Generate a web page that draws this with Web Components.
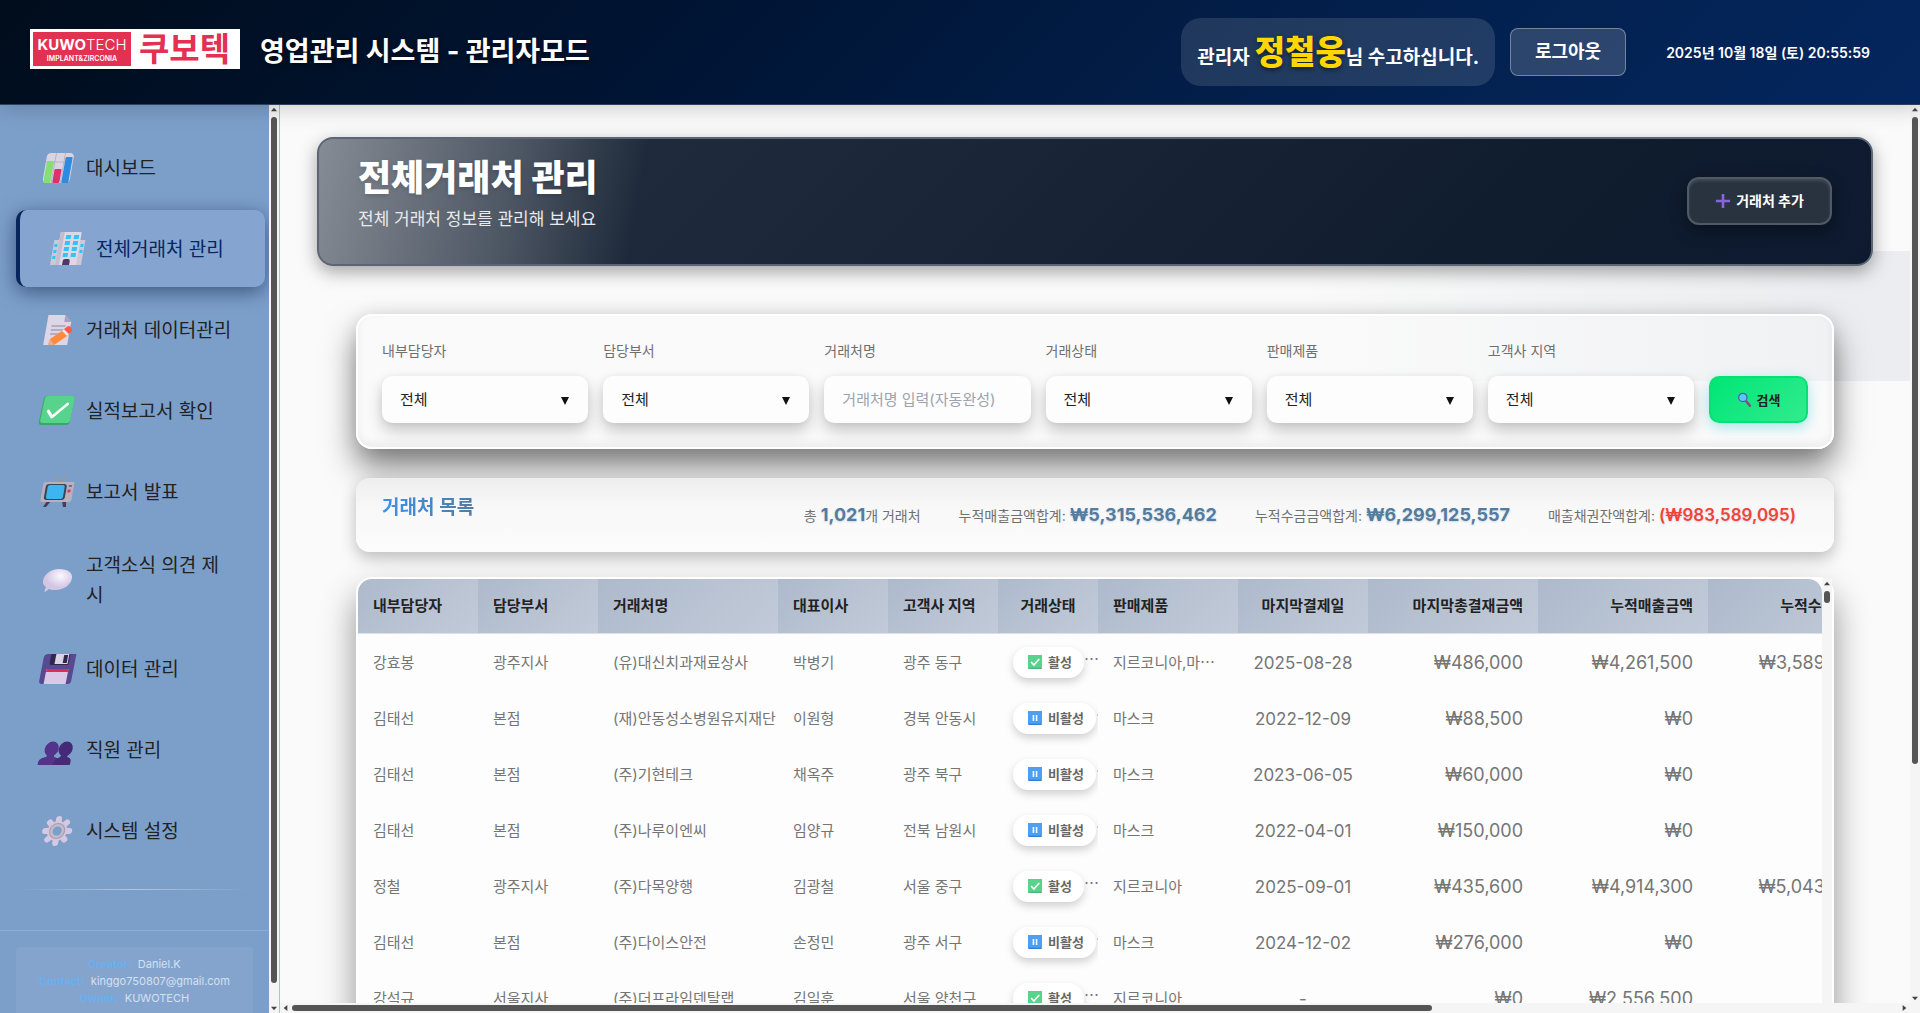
<!DOCTYPE html>
<html lang="ko">
<head>
<meta charset="utf-8">
<title>영업관리 시스템 - 관리자모드</title>
<style>
html,body{margin:0;height:100%;overflow:hidden}
body{font-family:"Inter","Noto Sans CJK KR",sans-serif;font-size:15px;color:#222;background:#fafafa}
</style>
</head>
<body>
<crm-app></crm-app>
<script>
const ICONS = {
  chart: `<g transform="translate(6 0) skewX(-10)"><rect x="4" y="3" width="27" height="30" rx="4" fill="#d9d4e2"/><path d="M13 3v30M22 3v30M4 12h27" stroke="#b9b2c6" stroke-width="1"/><rect x="5" y="11" width="7" height="22" rx="1" fill="#86df72"/><rect x="14" y="19" width="7" height="14" rx="1" fill="#e0316f"/><rect x="23" y="7" width="7" height="26" rx="1" fill="#2f8be0"/></g>`,
  building: `<g transform="translate(6 0) skewX(-10)"><path d="M2 9h6v25H2zM27 9h6v25h-6z" fill="#cfc6d8"/><rect x="7" y="1" width="21" height="33" rx="1" fill="#ded8e6"/><path d="M7 1h4v33H7z" fill="#c5bccf"/><g fill="#33c3f5"><rect x="13" y="4" width="5" height="4"/><rect x="21" y="4" width="5" height="4"/><rect x="13" y="10" width="5" height="4"/><rect x="21" y="10" width="5" height="4"/><rect x="13" y="16" width="5" height="4"/><rect x="21" y="16" width="5" height="4"/><rect x="13" y="22" width="5" height="4"/><rect x="21" y="22" width="5" height="4"/><rect x="3" y="13" width="3" height="3"/><rect x="3" y="19" width="3" height="3"/><rect x="3" y="25" width="3" height="3"/><rect x="29" y="13" width="3" height="3"/><rect x="29" y="19" width="3" height="3"/></g><path d="M14 34v-4q0-2 2-2h3q2 0 2 2v4z" fill="#4b3a63"/></g>`,
  memo: `<g transform="translate(6 0) skewX(-10)"><path d="M5 3h17l7 7v23H5z" fill="#dcd6e6"/><path d="M22 3v7h7z" fill="#aaa0b8"/><path d="M10 14h14M10 18h13M10 22h10" stroke="#a79eb5" stroke-width="1.6"/></g><path d="M10 33l2-6 15-10 5 5-16 11z" fill="#ff8a3c"/><path d="M10 33l2-6 4 6z" fill="#e2b08e"/><path d="M24 19l5 5 2-2-5-5z" fill="#e9e4f0"/><path d="M26 17l4-3q4 0 4 5l-3 3z" fill="#fb5a4a"/>`,
  check: `<g transform="translate(6 0) skewX(-12)"><rect x="1" y="3" width="31" height="29" rx="3" fill="#3aa66c"/><rect x="2" y="3" width="30" height="27" rx="3" fill="#57d38c"/><path d="M8 18l5 6 13-13" fill="none" stroke="#fff" stroke-width="2.8" stroke-linecap="round" stroke-linejoin="round"/></g>`,
  tv: `<path d="M22 8l-5-5M22 8l6-5" stroke="#a1958e" stroke-width="1.3"/><path d="M9 27l-4 6h3l5-6zM24 27l1 6h3v-6z" fill="#4c3a5c"/><g transform="translate(6 0) skewX(-10)"><path d="M3 8h28q1 0 1 1v17q0 2-2 2H3q-2 0-2-2V10q0-2 2-2z" fill="#b9b0bc"/><rect x="4" y="10" width="21" height="16" rx="3" fill="#37445c"/><rect x="6" y="11" width="17" height="14" rx="2" fill="#3db6f0"/><circle cx="28" cy="17" r="1.800" fill="#d93c70"/><path d="M27 12h3" stroke="#5e5468" stroke-width="1.500"/></g>`,
  bubble: `<defs><radialGradient id="b" cx=".6" cy=".3"><stop stop-color="#fbf9fd"/><stop offset="1" stop-color="#d3c6e4"/></radialGradient></defs><path d="M21 7c9 0 14 4 13 9-1 7-8 12-17 12-2 0-4 0-6-1l-4 3c-1 0 0-3 1-5-3-2-3-4-3-6 1-7 8-12 16-12z" fill="url(#b)"/>`,
  floppy: `<g transform="translate(7 0) skewX(-11)"><path d="M4 3h28v27q0 3-3 3H3q-3 0-3-3V7q0-4 4-4z" fill="#584a92"/><path d="M7 3h19v11H9q-2 0-2-2z" fill="#32264f"/><path d="M12 3h13v10H12z" fill="#d9d4e4"/><rect x="20" y="4" width="4" height="8" fill="#32264f"/><path d="M5 18h22v15H5z" fill="#d9c8e6"/><path d="M5 18h22v3H5z" fill="#df2b56"/></g>`,
  people: `<g transform="translate(6 0) skewX(-11)"><g fill="#53348a"><ellipse cx="11" cy="17" rx="7" ry="7.500"/><path d="M0 33c-1-6 3-7 7-8l1-3h6l1 3c5 1 5 3 4 8z"/></g><g fill="#462a77"><ellipse cx="25" cy="17" rx="7" ry="7.500"/><path d="M15 33c0-5 3-7 6-8l1-3h6v3c4 1 5 3 4 8z"/></g></g>`,
  gear: `<g transform="translate(4 0) skewX(-9)"><path d="M18 6v24M6 18h24M9.500 9.500l17 17M26.500 9.500l-17 17" stroke="#d6c9e3" stroke-width="6" stroke-linecap="round"/><circle cx="18" cy="18" r="10" fill="#d3c7dd"/><circle cx="18" cy="18" r="8" fill="#a79db0"/><circle cx="18" cy="18" r="7" fill="#c3bacb"/><circle cx="18" cy="18" r="4.500" fill="#7c9fca"/></g>`,
  plus: `<path d="M18 2v32M2 18h32" stroke="#8764d8" stroke-width="6"/>`,
  search: `<path d="M22 22l9 11" stroke="#8a4a80" stroke-width="6" stroke-linecap="round"/><circle cx="14" cy="13" r="10" fill="#5bc8f2" stroke="#4a5db8" stroke-width="3"/>`,
  ok: `<rect width="36" height="36" rx="3" fill="#45b878"/><rect width="36" height="33" rx="3" fill="#57d38c"/><path d="M8 18l7 8L29 10" fill="none" stroke="#fff" stroke-width="4"/>`,
  pause: `<rect width="36" height="36" rx="3" fill="#2f7fe0"/><rect width="36" height="33" rx="3" fill="#4c9ff5"/><path d="M14 10v16M22 10v16" stroke="#fff" stroke-width="4"/>`
};

class Base extends HTMLElement {
  connectedCallback() {
    if (this.shadowRoot) return;
    this.attachShadow({ mode: 'open' }).innerHTML = '<style>*{box-sizing:border-box}</style>' + this.render();
  }
}

customElements.define('app-icon', class extends Base {
  render() {
    return `<style>:host{display:block;flex:none;width:36px;height:36px}svg{display:block;width:100%;height:100%;overflow:visible}</style>
    <svg viewBox="0 0 36 36" aria-hidden="true">${ICONS[this.getAttribute('name')] || ''}</svg>`;
  }
});

customElements.define('scroll-rail', class extends Base {
  render() {
    const h = this.hasAttribute('horizontal');
    const up = h ? 'M7 0v10L1 5z' : 'M0 7h10L5 1z', down = h ? 'M1 0v10l6-5z' : 'M0 1h10L5 7z';
    const box = h ? '0 0 8 10' : '0 0 10 8';
    return `<style>
    :host{display:flex;flex-direction:${h ? 'row' : 'column'};align-items:center;background:#f5f5f5;${h ? 'height:10px;padding:0 3px' : 'width:10px;padding:2px 0'}}
    svg{flex:none;${h ? 'width:5px;height:6px' : 'width:6px;height:5px'};fill:#444}
    .t{flex:1;display:flex;flex-direction:${h ? 'row' : 'column'};${h ? 'width:100%;padding:0 4px' : 'padding:5px 0'};min-height:0;min-width:0}
    i{display:block;border-radius:3px;background:#555;${h ? 'height:6px;width' : 'width:6px;height'}:var(--thumb,50%)}
    </style><svg viewBox="${box}"><path d="${up}"/></svg><div class="t"><i></i></div><svg viewBox="${box}"><path d="${down}"/></svg>`;
  }
});

customElements.define('brand-logo', class extends Base {
  render() {
    return `<style>
    :host{display:flex;align-items:center;gap:8px;width:210px;height:40px;padding:3px;background:#fff;color:#e23151}
    .b{display:flex;flex-direction:column;align-items:center;justify-content:center;width:98px;height:34px;background:#e23151;color:#fff}
    .k{font:700 15px/18px "Inter",sans-serif}.k span{font-weight:300}
    .s{font:600 7px/9px "Inter",sans-serif}
    .n{font-size:33px;line-height:34px;font-weight:700}
    </style><div class="b"><div class="k">KUWO<span>TECH</span></div><div class="s">IMPLANT&amp;ZIRCONIA</div></div><div class="n">쿠보텍</div>`;
  }
});

customElements.define('app-header', class extends Base {
  render() {
    return `<style>
    :host{display:flex;align-items:center;justify-content:space-between;height:105px;padding:0 30px;color:#fff;background:linear-gradient(135deg,#010d1c 0%,#001433 35%,#03204d 70%,#04265e 100%);border-bottom:1px solid #2c405f;box-shadow:0 4px 20px rgba(0,0,0,.18);position:relative;z-index:2}
    .l{display:flex;align-items:flex-start;gap:20px}
    h1{margin:0;font-size:27px;line-height:46px;font-weight:700;text-shadow:0 2px 4px rgba(0,0,0,.5);white-space:nowrap}
    .r{display:flex;align-items:center;gap:15px;white-space:nowrap}
    .u{display:flex;align-items:baseline;height:68px;padding:0 16px;border-radius:20px;background:rgba(255,255,255,.12);font-size:19px;line-height:68px;font-weight:700}
    .u b{font-size:33px;color:#ffd700;text-shadow:0 2px 4px rgba(0,0,0,.5);margin-left:5px}
    button{width:116px;height:48px;border:1px solid rgba(255,255,255,.35);border-radius:8px;background:rgba(255,255,255,.16);color:#fff;font:700 18px/24px "Inter","Noto Sans CJK KR",sans-serif}
    time{min-width:249px;text-align:right;font-size:14px;font-weight:600;padding:0 20px}
    </style>
    <div class="l"><brand-logo></brand-logo><h1>영업관리 시스템 - 관리자모드</h1></div>
    <div class="r"><div class="u"><span>관리자</span><b>정철웅</b><span>님 수고하십니다.</span></div>
    <button type="button">로그아웃</button><time>2025년 10월 18일 (토) 20:55:59</time></div>`;
  }
});

customElements.define('nav-item', class extends Base {
  render() {
    return `<style>
    :host{display:block;margin:0 12px 4px 8px}
    a{display:flex;align-items:center;gap:12px;min-height:77px;padding:15px 24px 15px 30px;border-radius:10px;color:#222;text-decoration:none;font-size:19px;line-height:30px}
    :host([active]) a{margin:0 -8px 0 8px;padding-left:28px;background:#85a5d0;color:#06265c;border-left:4px solid #06265c;box-shadow:0 5px 20px rgba(10,30,70,.55)}
    span{flex:1;padding-top:2px}
    </style><a href="#"><app-icon name="${this.getAttribute('icon')}"></app-icon><span><slot></slot></span></a>`;
  }
});

customElements.define('side-bar', class extends Base {
  render() {
    return `<style>
    :host{display:flex;width:280px;flex:none;background:#7c9fca;border-right:1px solid #a9c0e0}
    .c{flex:1;min-width:0;overflow:hidden}
    nav{padding:24px 0 16px}
    hr{height:1px;margin:0 20px 40px;border:0;background:linear-gradient(90deg,transparent,#b3c7e2,transparent)}
    footer{border-top:1px solid #8eacd2;padding:16px}
    .f{padding:9px 0 24px;border-radius:4px;background:#84a4ce;text-align:center;font-size:11px;line-height:17px;color:#d5e0ef;white-space:nowrap}
    .f b{font-weight:600;color:#66b1f3;margin-right:3px}
    scroll-rail{--thumb:98%}
    </style>
    <div class="c"><nav aria-label="주 메뉴">
    <nav-item icon="chart">대시보드</nav-item><nav-item icon="building" active>전체거래처 관리</nav-item><nav-item icon="memo">거래처 데이터관리</nav-item><nav-item icon="check">실적보고서 확인</nav-item><nav-item icon="tv">보고서 발표</nav-item><nav-item icon="bubble">고객소식 의견 제시</nav-item><nav-item icon="floppy">데이터 관리</nav-item><nav-item icon="people">직원 관리</nav-item><nav-item icon="gear">시스템 설정</nav-item></nav>
    <hr><footer><div class="f"><div><b>Creator:</b> Daniel.K</div><div><b>Contact:</b> kinggo750807@gmail.com</div><div><b>Owner:</b> KUWOTECH</div></div></footer></div>
    <scroll-rail></scroll-rail>`;
  }
});

customElements.define('page-banner', class extends Base {
  render() {
    return `<style>
    :host{display:flex;align-items:center;justify-content:space-between;height:129px;padding:0 39px 2px;border:2px solid #5b6574;border-radius:16px;color:#fff;background:linear-gradient(100deg,rgba(255,255,255,.45) 0%,rgba(255,255,255,.2) 13%,transparent 21%),linear-gradient(135deg,#222d3d 0%,#1d293a 30%,#101d2e 75%,#0d1a30 100%);box-shadow:0 6px 18px rgba(0,0,0,.35)}
    .t{align-self:flex-start;padding-top:14px}
    h2{margin:0;font-size:36px;line-height:50px;font-weight:800;text-shadow:0 2px 4px rgba(0,0,0,.15)}
    p{margin:3px 0 0;font-size:17px;line-height:26px;color:#e8eaed}
    button{display:flex;align-items:center;justify-content:center;gap:5px;width:145px;height:48px;border:2px solid #505a67;border-radius:12px;background:#28333f;color:#fff;font:700 14px/20px "Inter","Noto Sans CJK KR",sans-serif;box-shadow:0 6px 16px rgba(0,0,0,.4),inset 0 2px 3px rgba(255,255,255,.12)}
    app-icon{width:16px;height:16px}
    </style><div class="t"><h2>전체거래처 관리</h2><p>전체 거래처 정보를 관리해 보세요</p></div><button type="button"><app-icon name="plus"></app-icon><span>거래처 추가</span></button>`;
  }
});

customElements.define('filter-field', class extends Base {
  render() {
    const ph = this.getAttribute('placeholder');
    return `<style>
    :host{display:flex;flex-direction:column;gap:14px;min-width:0}
    label{font-size:14px;line-height:22px;color:#6f6f6f}
    .w{position:relative}
    select,input{appearance:none;display:block;width:100%;height:47px;margin:0;padding:0 18px;border:0;border-radius:10px;background:#fdfdfd;color:#222;font:400 15px/22px "Inter","Noto Sans CJK KR",sans-serif;box-shadow:0 8px 16px rgba(0,0,0,.2),0 1px 6px rgba(0,0,0,.06)}
    input::placeholder{color:#9ca3af}
    svg{position:absolute;right:19px;top:21px;width:8px;height:8px;pointer-events:none}
    </style><label for="f">${this.getAttribute('label')}</label><div class="w">${ph ? `<input id="f" type="text" placeholder="${ph}">` : `<select id="f"><option>전체</option></select><svg viewBox="0 0 8 8"><path d="M0 0h8L4 8z" fill="#111"/></svg>`}</div>`;
  }
});

customElements.define('filter-card', class extends Base {
  render() {
    return `<style>
    :host{display:block;border:2px solid #fff;border-radius:16px;padding:24px;background:rgba(253,253,253,.3);box-shadow:0 18px 32px rgba(0,0,0,.5),0 0 18px rgba(0,0,0,.08),inset 0 -4px 8px rgba(0,0,0,.06)}
    form{display:grid;grid-template-columns:repeat(6,1fr) 99px;gap:15px;align-items:end}
    button{display:flex;align-items:center;justify-content:center;gap:5px;height:47px;border:2px solid #05e173;border-radius:10px;background:linear-gradient(135deg,#00e676,#31eb8e);color:#222;font:700 13px/20px "Inter","Noto Sans CJK KR",sans-serif;box-shadow:0 4px 14px rgba(0,190,210,.35)}
    app-icon{width:15px;height:15px}
    </style><form><filter-field label="내부담당자"></filter-field><filter-field label="담당부서"></filter-field><filter-field label="거래처명" placeholder="거래처명 입력(자동완성)"></filter-field><filter-field label="거래상태"></filter-field><filter-field label="판매제품"></filter-field><filter-field label="고객사 지역"></filter-field><button type="button"><app-icon name="search"></app-icon><span>검색</span></button></form>`;
  }
});

customElements.define('summary-bar', class extends Base {
  render() {
    return `<style>
    :host{display:flex;justify-content:space-between;height:74px;padding:0 38px 0 26px;border-radius:14px;background:linear-gradient(180deg,#eee 0%,#f8f8f8 40%,#fcfcfc 100%);box-shadow:0 6px 16px rgba(0,0,0,.25)}
    h3{margin:16px 0 0;height:28px;font-size:19px;line-height:28px;font-weight:600;background:linear-gradient(90deg,#3b92f0,#527ca0);-webkit-background-clip:text;background-clip:text;color:transparent}
    .s{display:flex;align-items:center;gap:38px;font-size:14px;line-height:24px;color:#707070;white-space:nowrap}
    b{font-size:18px;color:#527ca0;font-weight:700;text-shadow:0 1px 2px rgba(80,120,160,.25)}.r{font-size:17px;color:#f44336;font-weight:600}
    </style><h3>거래처 목록</h3><div class="s"><span>총 <b>1,021</b>개 거래처</span><span>누적매출금액합계: <b>₩5,315,536,462</b></span><span>누적수금금액합계: <b>₩6,299,125,557</b></span><span>매출채권잔액합계: <b class="r">(₩983,589,095)</b></span></div>`;
  }
});

customElements.define('status-pill', class extends Base {
  render() {
    const on = this.hasAttribute('on');
    return `<style>
    :host{display:flex;align-items:center}
    .p{display:flex;flex:none;align-items:center;gap:6px;height:31px;padding:0 12px 0 15px;border-radius:16px;background:#fff;font-size:13px;line-height:20px;font-weight:600;color:#666;box-shadow:0 4px 8px rgba(0,0,0,.18)}
    app-icon{width:14px;height:14px}.d{line-height:20px;margin-bottom:4px}
    </style><div class="p"><app-icon name="${on ? 'ok' : 'pause'}"></app-icon><span>${on ? '활성' : '비활성'}</span></div><span class="d">⋯</span>`;
  }
});

const COLS = [['내부담당자',120,''],['담당부서',120,''],['거래처명',180,''],['대표이사',110,''],['고객사 지역',110,''],['거래상태',100,'c'],['판매제품',140,''],['마지막결제일',130,'c n'],['마지막총결재금액',170,'e'],['누적매출금액',170,'e'],['누적수금금액',170,'e']];
const ROWS = [
  ['강효봉','광주지사','(유)대신치과재료상사','박병기','광주 동구',1,'지르코니아,마⋯','2025-08-28','₩486,000','₩4,261,500','₩3,589,500'],
  ['김태선','본점','(재)안동성소병원유지재단','이원형','경북 안동시',0,'마스크','2022-12-09','₩88,500','₩0',''],
  ['김태선','본점','(주)기현테크','채옥주','광주 북구',0,'마스크','2023-06-05','₩60,000','₩0',''],
  ['김태선','본점','(주)나루이엔씨','임양규','전북 남원시',0,'마스크','2022-04-01','₩150,000','₩0',''],
  ['정철','광주지사','(주)다목양행','김광철','서울 중구',1,'지르코니아','2025-09-01','₩435,600','₩4,914,300','₩5,043,300'],
  ['김태선','본점','(주)다이스안전','손정민','광주 서구',0,'마스크','2024-12-02','₩276,000','₩0',''],
  ['강석규','서울지사','(주)더프라임덴탈랩','김일훈','서울 양천구',1,'지르코니아','-','₩0','₩2,556,500','']
];

customElements.define('client-table', class extends Base {
  render() {
    const cell = (v, i) => `<td class="${COLS[i][2]}${i === 5 ? ' s' : ''}">${i === 5 ? `<status-pill${v ? ' on' : ''}></status-pill>` : v}</td>`;
    return `<style>
    :host{display:flex;border:2px solid #fff;border-radius:16px;background:#fdfdfd;box-shadow:0 18px 34px rgba(0,0,0,.42)}
    .v{flex:1;min-width:0;overflow:hidden;border-radius:14px 14px 0 0}
    table{width:1520px;table-layout:fixed;border-collapse:separate;border-spacing:0}
    th{height:55px;padding:0 15px;text-align:left;font-size:15px;line-height:22px;font-weight:700;color:#222;background:linear-gradient(135deg,#adbacc,#c2cad8);border-bottom:1px solid #dbe1e9;white-space:nowrap}
    td{height:56px;padding:2px 0 0 15px;font-size:15px;line-height:22px;color:#757575;white-space:nowrap;overflow:hidden}
    .c{text-align:center}.e{text-align:right}
    td.c,td.e{padding:2px 15px 0}td.n{font-size:17px}td.e{font-size:18px}td.s{padding:0 0 0 15px}
    scroll-rail{margin:0;--thumb:12px}
    </style><div class="v"><table><colgroup>${COLS.map(c => `<col style="width:${c[1]}px">`).join('')}</colgroup><thead><tr>${COLS.map(c => `<th scope="col" class="${c[2]}">${c[0]}</th>`).join('')}</tr></thead><tbody>${ROWS.map(r => `<tr>${r.map(cell).join('')}</tr>`).join('')}</tbody></table></div><scroll-rail></scroll-rail>`;
  }
});

customElements.define('crm-app', class extends Base {
  render() {
    return `<style>
    :host{display:flex;flex-direction:column;height:100vh}
    .body{flex:1;display:flex;min-height:0}
    main{flex:1;min-width:0;display:grid;grid-template-columns:minmax(0,1fr) 10px;grid-template-rows:minmax(0,1fr) 10px}
    .page{overflow:hidden;padding:32px 37px 0;background:linear-gradient(90deg,transparent 63%,rgba(225,228,233,.6) 96%) 0 146px/100% 130px no-repeat,#fafafa}
    .stack{display:flex;flex-direction:column;margin:48px 39px 0}
    summary-bar{margin-top:29px}client-table{margin-top:25px}
    .v{--thumb:74%}.h{--thumb:71%}
    .corner{background:#f5f5f5}
    </style>
    <app-header></app-header>
    <div class="body"><side-bar></side-bar><main><div class="page"><page-banner></page-banner><div class="stack"><filter-card></filter-card><summary-bar></summary-bar><client-table></client-table></div></div><scroll-rail class="v"></scroll-rail><scroll-rail class="h" horizontal></scroll-rail><div class="corner"></div></main></div>`;
  }
});
</script>
</body>
</html>
